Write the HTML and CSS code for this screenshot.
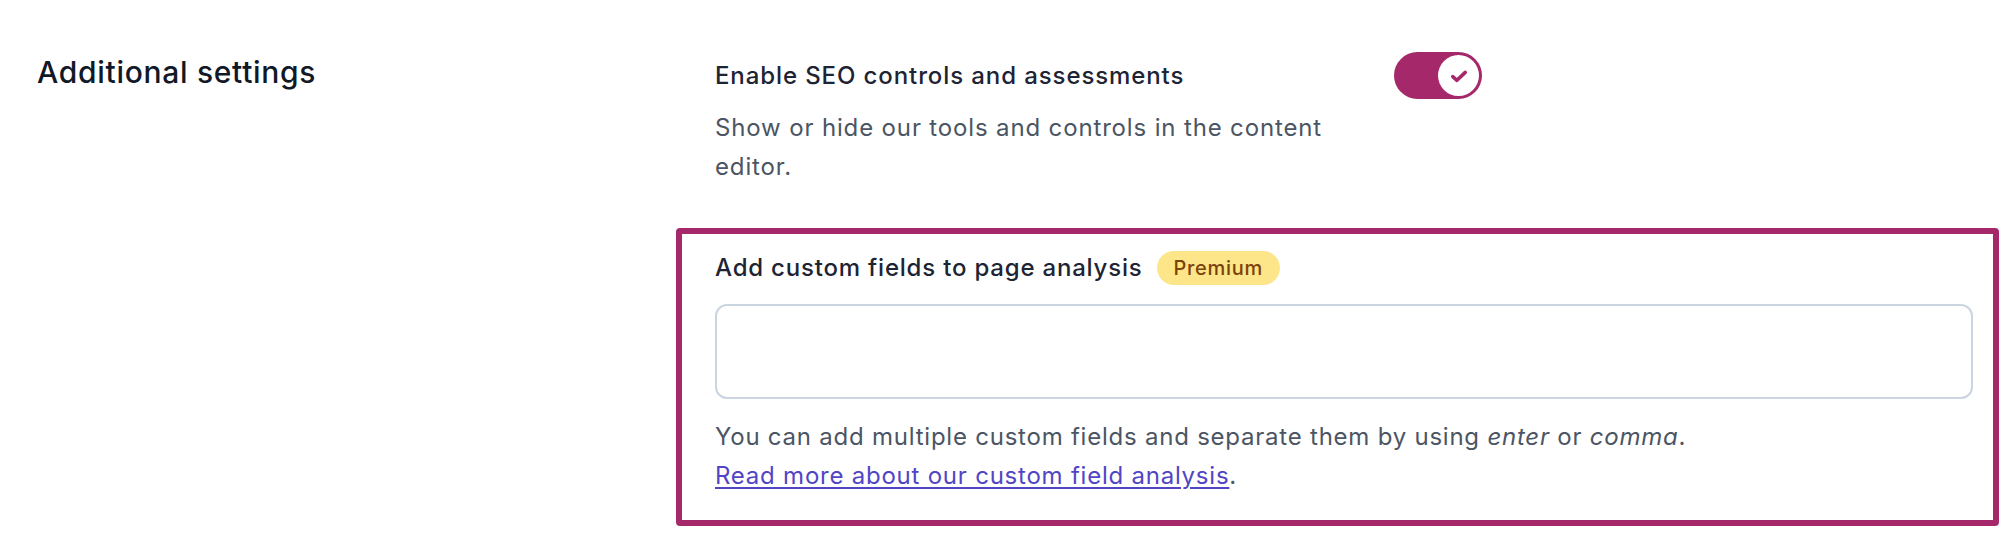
FILE: index.html
```html
<!DOCTYPE html>
<html lang="en">
<head>
<meta charset="utf-8">
<title>Additional settings</title>
<link rel="stylesheet" href="styles.css">
</head>
<body>
<div class="page">
  <h2 class="section-title">Additional settings</h2>
  <div class="section-body">
    <div class="setting-row">
      <div class="setting-text">
        <div class="setting-label">Enable SEO controls and assessments</div>
        <p class="setting-desc">Show or hide our tools and controls in the content editor.</p>
      </div>
      <button class="toggle" type="button" aria-pressed="true" aria-label="Enable SEO controls and assessments">
        <span class="toggle-knob">
          <svg viewBox="0 0 20 20" width="24" height="24" aria-hidden="true"><path d="M4.8 10.6 L8.3 13.6 L15.2 7" fill="none" stroke="#a4286a" stroke-width="3" stroke-linecap="round" stroke-linejoin="round"/></svg>
        </span>
      </button>
    </div>
    <div class="highlight">
      <div class="field-label-row">
        <label class="field-label" for="custom-fields">Add custom fields to page analysis</label>
        <span class="badge">Premium</span>
      </div>
      <div class="tag-input" id="custom-fields"></div>
      <p class="help">You can add multiple custom fields and separate them by using <em>enter</em> or <em>comma</em>.<br><a href="#">Read more about our custom field analysis</a>.</p>
    </div>
  </div>
</div>
</body>
</html>
```

FILE: styles.css
```css
* { box-sizing: border-box; }

html, body {
  margin: 0;
  padding: 0;
  background: #ffffff;
}

body {
  font-family: Inter, "Noto Sans", "Liberation Sans", sans-serif;
  color: #111827;
}

.page {
  display: grid;
  grid-template-columns: 678px 1284px;
  padding: 52px 0 0 37px;
}

.section-title {
  margin: 2px 0 0;
  font-size: 30px;
  line-height: 36px;
  font-weight: 500;
  color: #111827;
  letter-spacing: 0.7px;
}

.section-body {
  display: flex;
  flex-direction: column;
}

.setting-row {
  display: flex;
  align-items: flex-start;
  gap: 24px;
}

.setting-text {
  width: 655px;
  padding-top: 6px;
}

.setting-label {
  font-size: 24px;
  line-height: 36px;
  font-weight: 500;
  color: #1e2433;
  letter-spacing: 0.9px;
}

.setting-desc {
  margin: 14px 0 0;
  font-size: 24px;
  line-height: 39px;
  color: #4b5563;
  letter-spacing: 0.85px;
}

.toggle {
  width: 88px;
  height: 47px;
  border: none;
  border-radius: 24px;
  background: #a4286a;
  padding: 3px;
  display: flex;
  justify-content: flex-end;
  align-items: center;
  cursor: pointer;
}

.toggle-knob {
  width: 41px;
  height: 41px;
  border-radius: 50%;
  background: #ffffff;
  display: flex;
  align-items: center;
  justify-content: center;
}

.highlight {
  margin: 42px 0 0 -39px;
  border: 6px solid #a4286a;
  border-radius: 4px;
  padding: 17px 20px 25px 33px;
}

.field-label-row {
  display: flex;
  align-items: center;
  gap: 14px;
  height: 34px;
}

.field-label {
  font-size: 24px;
  line-height: 36px;
  font-weight: 500;
  color: #1e2433;
  letter-spacing: 0.8px;
}

.badge {
  display: inline-flex;
  align-items: center;
  height: 34px;
  padding: 0 17px;
  border-radius: 17px;
  background: #fde68a;
  color: #7c4308;
  font-size: 20px;
  font-weight: 500;
  letter-spacing: 0.7px;
}

.tag-input {
  margin-top: 19px;
  height: 95px;
  border: 2px solid #cbd5e1;
  border-radius: 12px;
  background: #ffffff;
}

.help {
  margin: 18px 0 0;
  font-size: 24px;
  line-height: 39px;
  color: #4b5563;
  letter-spacing: 0.77px;
}

.help a {
  color: #5145c6;
  text-decoration: underline;
  text-underline-offset: 3px;
}
```
